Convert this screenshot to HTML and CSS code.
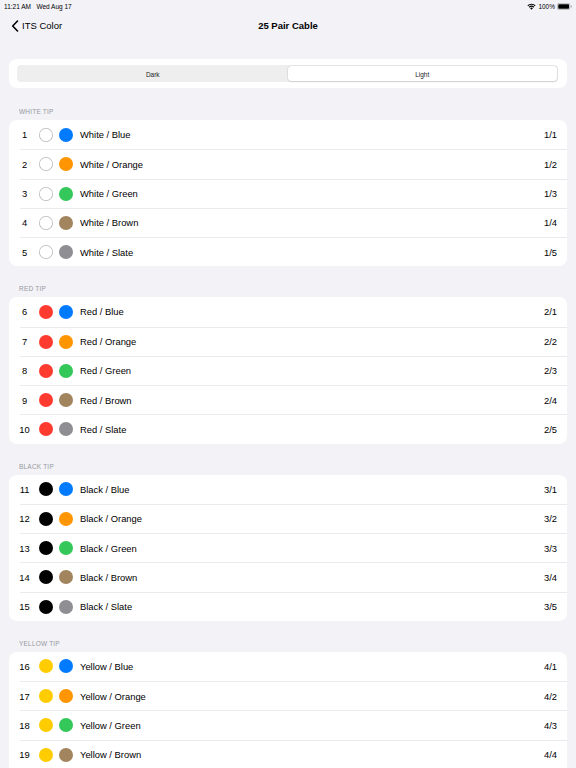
FILE: index.html
```html
<!DOCTYPE html>
<html>
<head>
<meta charset="utf-8">
<link rel="stylesheet" href="styles.css">
</head>
<body>
<div class="status">
  <span class="time">11:21 AM&nbsp;&nbsp;&nbsp;Wed Aug 17</span>
  <span class="sys">
    <svg class="wifi" width="9" height="7" viewBox="0 0 18 14"><path d="M9 13.5 L6.2 10.4 A4 4 0 0 1 11.8 10.4 Z" fill="#000"/><path d="M3.6 7.6 A7.7 7.7 0 0 1 14.4 7.6 L12.8 9.3 A5.4 5.4 0 0 0 5.2 9.3 Z" fill="#000"/><path d="M0.8 4.7 A11.8 11.8 0 0 1 17.2 4.7 L15.6 6.4 A9.5 9.5 0 0 0 2.4 6.4 Z" fill="#000"/></svg>
    <span>100%</span>
    <svg class="batt" width="15" height="7" viewBox="0 0 30 14"><rect x="0.8" y="0.8" width="25" height="12.4" rx="3" fill="none" stroke="#999" stroke-width="1.2"/><rect x="2.5" y="2.5" width="21.6" height="9" rx="1.6" fill="#000"/><path d="M27.6 4.8 A2 2 0 0 1 27.6 9.2 Z" fill="#999"/></svg>
  </span>
</div>
<div class="nav">
  <div class="back">
    <svg width="8" height="12" viewBox="0 0 8 12"><path d="M6.5 1 L1.7 6 L6.5 11" fill="none" stroke="#000" stroke-width="1.6" stroke-linecap="round" stroke-linejoin="round"/></svg>
    <span>ITS Color</span>
  </div>
  <div class="title">25 Pair Cable</div>
</div>
<div class="page">
  <div class="segcard">
    <div class="seg">
      <div class="opt">Dark</div>
      <div class="opt sel">Light</div>
    </div>
  </div>
  <div id="groups" class="groups"></div>
</div>
<script src="app.js"></script>
</body>
</html>
```
FILE: app.js
```js
var tips = [["WHITE TIP","White","#ffffff"],["RED TIP","Red","#ff3b30"],["BLACK TIP","Black","#000000"],["YELLOW TIP","Yellow","#ffcc00"]];
var rings = [["Blue","#007aff"],["Orange","#ff9500"],["Green","#34c759"],["Brown","#a2845e"],["Slate","#8e8e93"]];
var html = "";
var n = 1;
tips.forEach(function(t, ti){
  html += '<div class="hdr">' + t[0] + '</div><div class="card">';
  rings.forEach(function(r, ri){
    var tipCls = t[1] === "White" ? "dot white" : "dot";
    html += '<div class="row"><span class="num">' + n + '</span>' +
      '<span class="' + tipCls + '" style="background:' + t[2] + '"></span>' +
      '<span class="dot" style="background:' + r[1] + '"></span>' +
      '<span class="name">' + t[1] + ' / ' + r[0] + '</span>' +
      '<span class="val">' + (ti+1) + '/' + (ri+1) + '</span></div>';
    n++;
  });
  html += '</div>';
});
document.getElementById("groups").innerHTML = html;
```
FILE: styles.css
```css
* { box-sizing: border-box; }
html, body { margin: 0; padding: 0; }
body {
  background: #f2f2f7;
  font-family: "Liberation Sans", Arial, sans-serif;
  color: #000;
  width: 576px;
  height: 768px;
  overflow: hidden;
}
.status {
  height: 12px;
  display: flex;
  justify-content: space-between;
  align-items: center;
  padding: 0 4px 0 4px;
  font-size: 6.5px;
}
.status .sys { display: flex; align-items: center; gap: 2px; }
.nav {
  position: relative;
  height: 27px;
  display: flex;
  align-items: center;
  padding-left: 11px;
}
.back { display: flex; align-items: center; gap: 3px; font-size: 9.5px; }
.title {
  position: absolute;
  left: 0; right: 0; top: 0; bottom: 0;
  display: flex; align-items: center; justify-content: center;
  font-weight: bold;
  font-size: 9.5px;
  pointer-events: none;
}
.page { padding: 0 9px; }
.segcard {
  margin-top: 20px;
  background: #fff;
  border-radius: 8px;
  padding: 6px 9px 6px 8px;
  height: 29px;
}
.seg {
  display: flex;
  background: #eeeeef;
  border-radius: 4px;
  height: 17px;
  padding: 1px;
}
.opt {
  flex: 1;
  display: flex; align-items: center; justify-content: center;
  font-size: 6.5px;
  color: #222;
  padding-top: 1px;
}
.opt.sel {
  background: #fff;
  border-radius: 3.5px;
  box-shadow: 0 0 0 0.5px rgba(0,0,0,0.08), 0 1px 2px rgba(0,0,0,0.1);
}
.groups { padding-top: 1px; }
.hdr {
  padding: 19px 0 0 10px;
  height: 31px;
  font-size: 6.5px;
  line-height: 8px;
  color: #98989d;
  letter-spacing: 0.2px;
}
.card {
  background: #fff;
  border-radius: 8px;
  overflow: hidden;
}
.row {
  height: 29.25px;
  display: flex;
  align-items: center;
  padding-right: 10px;
  font-size: 9.4px;
  position: relative;
}
.row + .row { border-top: 1px solid #ebebef; margin-left: 11px; }
.row + .row .num { margin-left: -11px; }
.num {
  width: 30px;
  padding-left: 1px;
  text-align: center;
  flex: none;
}
.dot {
  width: 14px; height: 14px;
  border-radius: 50%;
  flex: none;
  margin-right: 6px;
}
.dot.white { box-shadow: inset 0 0 0 0.8px #b9b9be; }
.name { flex: 1; margin-left: 1px; }
.val { text-align: right; }
```
